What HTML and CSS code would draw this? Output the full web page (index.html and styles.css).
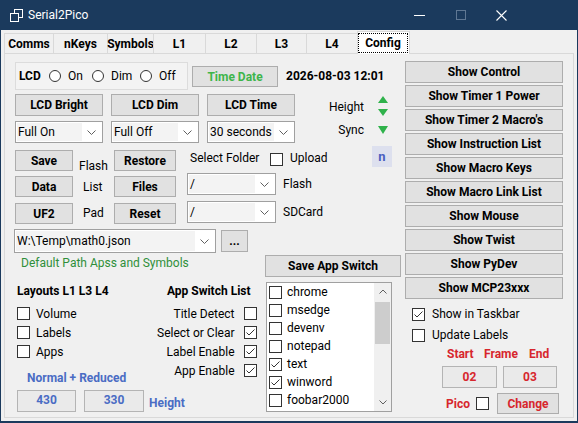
FILE: index.html
```html
<!DOCTYPE html>
<html lang="en">
<head>
<meta charset="utf-8">
<title>Serial2Pico</title>
<link rel="stylesheet" href="styles.css">
</head>
<body>
<div class="window">
  <div class="titlebar">
    <svg class="app-icon" width="13" height="13" viewBox="0 0 13 13">
      <rect x="4.5" y="0.5" width="8" height="8" fill="none" stroke="#fff"/>
      <rect x="0.5" y="4.5" width="8" height="8" fill="#1b3a5d" stroke="#fff"/>
    </svg>
    <span class="title">Serial2Pico</span>
    <div class="winctl">
      <span class="ctl"><svg width="11" height="1"><rect width="11" height="1" fill="#fff"/></svg></span>
      <span class="ctl"><svg width="10" height="10"><rect x="0.5" y="0.5" width="9" height="9" fill="none" stroke="#5f7793"/></svg></span>
      <span class="ctl"><svg width="11" height="11" viewBox="0 0 11 11"><path d="M0.5 0.5 L10.5 10.5 M10.5 0.5 L0.5 10.5" stroke="#fff" stroke-width="1.1"/></svg></span>
    </div>
  </div>

  <div class="tabs">
    <div class="tab tab-comms">Comms</div>
    <div class="tab tab-nkeys">nKeys</div>
    <div class="tab tab-symbols">Symbols</div>
    <div class="tab tab-l1">L1</div>
    <div class="tab tab-l2">L2</div>
    <div class="tab tab-l3">L3</div>
    <div class="tab tab-l4">L4</div>
    <div class="tab tab-config sel"><span class="focus">Config</span></div>
  </div>

  <div class="page">
    <div class="left">
      <!-- LCD mode + clock -->
      <div class="r1">
        <div class="lcd-group">
          <span class="lcd-label">LCD</span>
          <span class="radio-item ri-on"><span class="radio"></span>On</span>
          <span class="radio-item ri-dim"><span class="radio"></span>Dim</span>
          <span class="radio-item"><span class="radio"></span>Off</span>
        </div>
        <div class="btn time-btn">Time Date</div>
        <span class="datetime">2026-08-03 12:01</span>
      </div>

      <!-- LCD timers -->
      <div class="r23">
        <div class="grid3">
          <div class="btn">LCD Bright</div>
          <div class="btn">LCD Dim</div>
          <div class="btn">LCD Time</div>
          <div class="combo"><span class="val">Full On</span><span class="drop"><svg width="9" height="5" viewBox="0 0 9 5"><path d="M0.5 0.5 L4.5 4.5 L8.5 0.5" fill="none" stroke="#606060"/></svg></span></div>
          <div class="combo"><span class="val">Full Off</span><span class="drop"><svg width="9" height="5" viewBox="0 0 9 5"><path d="M0.5 0.5 L4.5 4.5 L8.5 0.5" fill="none" stroke="#606060"/></svg></span></div>
          <div class="combo"><span class="val">30 seconds</span><span class="drop"><svg width="9" height="5" viewBox="0 0 9 5"><path d="M0.5 0.5 L4.5 4.5 L8.5 0.5" fill="none" stroke="#606060"/></svg></span></div>
        </div>
        <div class="side">
          <span class="side-text h">Height</span>
          <span class="arrows">
            <svg width="10" height="7" viewBox="0 0 10 7"><path d="M5 0 L10 7 H0 Z" fill="#2fb24b"/></svg>
            <svg width="10" height="7" viewBox="0 0 10 7"><path d="M0 0 H10 L5 7 Z" fill="#2fb24b"/></svg>
          </span>
          <span class="side-text s">Sync</span>
          <span class="sync-arrow"><svg width="10" height="8" viewBox="0 0 10 8"><path d="M0 0 H10 L5 8 Z" fill="#2fb24b"/></svg></span>
        </div>
      </div>

      <!-- file actions -->
      <div class="r4a">
        <div class="btn btn-s">Save</div>
        <span class="lblcol flash-lbl">Flash</span>
        <div class="btn btn-m">Restore</div>
        <span class="sel-folder">Select Folder</span>
        <span class="chk chk-up"></span>
        <span class="upload">Upload</span>
        <span class="nbox">n</span>
      </div>
      <div class="r4b">
        <div class="btn btn-s">Data</div>
        <span class="lblcol list-lbl">List</span>
        <div class="btn btn-m">Files</div>
        <div class="combo folder"><span class="val">/</span><span class="drop"><svg width="9" height="5" viewBox="0 0 9 5"><path d="M0.5 0.5 L4.5 4.5 L8.5 0.5" fill="none" stroke="#606060"/></svg></span></div>
        <span class="dest">Flash</span>
      </div>
      <div class="r4c">
        <div class="btn btn-s">UF2</div>
        <span class="lblcol pad-lbl">Pad</span>
        <div class="btn btn-m">Reset</div>
        <div class="combo folder"><span class="val">/</span><span class="drop"><svg width="9" height="5" viewBox="0 0 9 5"><path d="M0.5 0.5 L4.5 4.5 L8.5 0.5" fill="none" stroke="#606060"/></svg></span></div>
        <span class="dest">SDCard</span>
      </div>

      <!-- default path -->
      <div class="r5">
        <div class="combo path"><span class="val">W:\Temp\math0.json</span><span class="drop"><svg width="9" height="5" viewBox="0 0 9 5"><path d="M0.5 0.5 L4.5 4.5 L8.5 0.5" fill="none" stroke="#606060"/></svg></span></div>
        <div class="btn dots">...</div>
      </div>

      <div class="lower">
        <div class="lp">
          <span class="defpath">Default Path Apss and Symbols</span>
          <div class="cols">
            <div class="lc">
              <span class="hdr">Layouts L1 L3 L4</span>
              <div class="crows">
                <div class="crow"><span class="chk"></span>Volume</div>
                <div class="crow"><span class="chk"></span>Labels</div>
                <div class="crow"><span class="chk"></span>Apps</div>
              </div>
              <span class="nr">Normal + Reduced</span>
              <div class="hrow">
                <span class="hbox hb1">430</span>
                <span class="hbox hb2">330</span>
                <span class="hlabel">Height</span>
              </div>
            </div>
            <div class="rc">
              <span class="hdr">App Switch List</span>
              <div class="crows">
                <div class="rrow">Title Detect<span class="chk"></span></div>
                <div class="rrow">Select or Clear<span class="chk on"><svg width="11" height="11" viewBox="0 0 11 11"><path d="M1.5 5.5 L4 8 L9.5 2.5" fill="none" stroke="#333"/></svg></span></div>
                <div class="rrow">Label Enable<span class="chk on"><svg width="11" height="11" viewBox="0 0 11 11"><path d="M1.5 5.5 L4 8 L9.5 2.5" fill="none" stroke="#333"/></svg></span></div>
                <div class="rrow">App Enable<span class="chk on"><svg width="11" height="11" viewBox="0 0 11 11"><path d="M1.5 5.5 L4 8 L9.5 2.5" fill="none" stroke="#333"/></svg></span></div>
              </div>
            </div>
          </div>
        </div>
        <div class="rp">
          <div class="btn save-sw">Save App Switch</div>
          <div class="clist">
            <div class="items">
              <div class="item"><span class="chk"></span>chrome</div>
              <div class="item"><span class="chk"></span>msedge</div>
              <div class="item"><span class="chk"></span>devenv</div>
              <div class="item"><span class="chk"></span>notepad</div>
              <div class="item"><span class="chk on"><svg width="11" height="11" viewBox="0 0 11 11"><path d="M1.5 5.5 L4 8 L9.5 2.5" fill="none" stroke="#333"/></svg></span>text</div>
              <div class="item"><span class="chk on"><svg width="11" height="11" viewBox="0 0 11 11"><path d="M1.5 5.5 L4 8 L9.5 2.5" fill="none" stroke="#333"/></svg></span>winword</div>
              <div class="item"><span class="chk"></span>foobar2000</div>
            </div>
            <div class="sbar">
              <span class="sb-btn"><svg width="8" height="5" viewBox="0 0 8 5"><path d="M0.5 4.5 L4 1 L7.5 4.5" fill="none" stroke="#606060"/></svg></span>
              <span class="thumb"></span>
              <span class="sb-fill"></span>
              <span class="sb-btn"><svg width="8" height="5" viewBox="0 0 8 5"><path d="M0.5 0.5 L4 4 L7.5 0.5" fill="none" stroke="#606060"/></svg></span>
            </div>
          </div>
        </div>
      </div>
    </div>

    <div class="right">
      <div class="rbtns">
        <div class="btn">Show Control</div>
        <div class="btn">Show Timer 1 Power</div>
        <div class="btn">Show Timer 2 Macro's</div>
        <div class="btn">Show Instruction List</div>
        <div class="btn">Show Macro Keys</div>
        <div class="btn">Show Macro Link List</div>
        <div class="btn">Show Mouse</div>
        <div class="btn">Show Twist</div>
        <div class="btn">Show PyDev</div>
        <div class="btn">Show MCP23xxx</div>
      </div>
      <div class="rchk first"><span class="chk on"><svg width="11" height="11" viewBox="0 0 11 11"><path d="M1.5 5.5 L4 8 L9.5 2.5" fill="none" stroke="#333"/></svg></span>Show in Taskbar</div>
      <div class="rchk"><span class="chk"></span>Update Labels</div>
      <div class="sfe"><span class="sfe-start">Start</span><span class="sfe-frame">Frame</span><span>End</span></div>
      <div class="fbox-row">
        <span class="fbox fb1">02</span>
        <span class="fbox fb2">03</span>
      </div>
      <div class="pico-row">
        <span class="pico">Pico</span>
        <span class="chk"></span>
        <div class="btn change">Change</div>
      </div>
    </div>
  </div>
</div>
</body>
</html>
```

FILE: styles.css
```css
* { box-sizing: border-box; }

html, body {
  margin: 0;
  padding: 0;
}

body {
  width: 578px;
  height: 423px;
  overflow: hidden;
  font-family: Roboto, "Noto Sans", sans-serif;
  font-size: 12px;
  line-height: 16px;
  color: #000;
  background: #f0f0f0;
  white-space: nowrap;
}

/* window frame */
.window {
  width: 578px;
  height: 423px;
  display: flex;
  flex-direction: column;
  background: #f0f0f0;
  border: 1px solid #1b3a5d;
  border-top: 0;
  border-bottom-width: 2px;
}

.titlebar {
  flex: none;
  height: 30px;
  margin: 0 -1px;
  display: flex;
  align-items: center;
  background: #1b3a5d;
  color: #fff;
}

.app-icon { margin-left: 10px; }

.title { margin-left: 5px; }

.winctl {
  margin-left: auto;
  margin-right: 56px;
  display: flex;
}

.ctl {
  width: 41px;
  height: 30px;
  display: flex;
  align-items: center;
  justify-content: center;
}

/* tab strip */
.tabs {
  flex: none;
  height: 23px;
  margin-left: 3px;
  display: flex;
  align-items: flex-end;
  position: relative;
  z-index: 1;
}

.tab {
  height: 20px;
  margin-left: -1px;
  display: flex;
  align-items: center;
  justify-content: center;
  border: 1px solid #d9d9d9;
  border-bottom: 0;
  background: #f0f0f0;
  font-weight: bold;
}

.tab-comms { width: 50px; margin-left: 0; }
.tab-nkeys { width: 55px; }
.tab-symbols { width: 47px; }
.tab-l1 { width: 53px; }
.tab-l2 { width: 52px; }
.tab-l3 { width: 51px; }
.tab-l4 { width: 52px; }
.tab-config { width: 53px; }

.tab.sel {
  height: 23px;
  margin-bottom: -1px;
  padding: 1px 1px 1px 0;
  align-items: stretch;
  background: #fff;
}

.focus {
  flex: 1;
  display: flex;
  align-items: center;
  justify-content: center;
  border: 1px dotted #000;
}

/* tab page */
.page {
  flex: none;
  width: 570px;
  height: 365px;
  margin-left: 3px;
  padding: 7px 0 0 9px;
  display: flex;
  border: 1px solid #d9d9d9;
}

.left {
  flex: none;
  width: 387px;
  padding-top: 1px;
  display: flex;
  flex-direction: column;
}

.right {
  flex: none;
  width: 158px;
  margin-left: 4px;
  display: flex;
  flex-direction: column;
}

/* common controls */
.btn {
  flex: none;
  height: 22px;
  display: flex;
  align-items: center;
  justify-content: center;
  background: #e1e1e1;
  border: 1px solid #adadad;
  font-weight: bold;
}

.chk {
  flex: none;
  width: 13px;
  height: 13px;
  display: inline-flex;
  align-items: center;
  justify-content: center;
  background: #fff;
  border: 1px solid #333;
}

.radio {
  flex: none;
  width: 12px;
  height: 12px;
  border: 1px solid #333;
  border-radius: 50%;
  background: #fff;
}

.combo {
  flex: none;
  height: 22px;
  display: flex;
  padding: 1px;
  background: #fff;
  border: 1px solid #a0a0a0;
}

.combo .val {
  flex: 1;
  padding-left: 1px;
  line-height: 18px;
  overflow: hidden;
  background: #f3f3f3;
}

.combo .drop {
  width: 19px;
  display: flex;
  align-items: center;
  justify-content: center;
}

/* LCD row */
.r1 {
  height: 28px;
  display: flex;
}

.lcd-group {
  flex: none;
  width: 173px;
  height: 28px;
  margin-left: 1px;
  padding-left: 3px;
  display: flex;
  align-items: center;
  background: #f3f3f3;
  border: 1px solid #dcdcdc;
}

.lcd-label { width: 30px; font-weight: bold; }

.radio-item {
  display: flex;
  align-items: center;
  gap: 7px;
}

.ri-on { width: 43px; }
.ri-dim { width: 48px; }

.time-btn {
  width: 86px;
  height: 21px;
  margin: 4px 0 0 4px;
  color: #3db54a;
}

.datetime {
  align-self: center;
  margin-left: 8px;
  font-weight: bold;
}

/* LCD timers */
.r23 {
  margin-top: 4px;
  display: flex;
}

.grid3 {
  margin-left: 1px;
  display: grid;
  grid-template-columns: repeat(3, 88px);
  grid-template-rows: 22px 22px;
  column-gap: 8px;
  row-gap: 5px;
}

.side {
  display: grid;
  grid-template-columns: 69px 10px;
  grid-template-rows: 27px 22px;
  column-gap: 14px;
}

.side-text { text-align: right; }
.side-text.h { margin-top: 5px; }
.side-text.s { margin-top: 1px; }

.arrows {
  margin-top: 2px;
  display: flex;
  flex-direction: column;
  gap: 6px;
}

.arrows svg, .sync-arrow svg { display: block; }

.sync-arrow { margin-top: 5px; }

/* file actions */
.r4a, .r4b, .r4c {
  display: flex;
  align-items: flex-start;
}

.r4a { height: 25px; margin-top: 3px; }
.r4b { height: 24px; margin-top: 2px; }
.r4c { height: 23px; margin-top: 4px; }

.btn-s { width: 58px; height: 21px; margin-left: 1px; }
.btn-m { width: 62px; height: 21px; }

.r4a .btn { margin-top: 4px; }
.r4b .btn { margin-top: 3px; }
.r4c .btn { margin-top: 2px; }

.lblcol { flex: none; width: 41px; }
.flash-lbl { padding-left: 6px; margin-top: 12px; }
.list-lbl { padding-left: 10px; margin-top: 6px; }
.pad-lbl { padding-left: 10px; margin-top: 4px; }

.sel-folder { flex: none; width: 80px; margin: 4px 0 0 14px; }
.chk-up { margin-top: 7px; }
.upload { margin: 4px 0 0 7px; }

.nbox {
  flex: none;
  width: 20px;
  height: 21px;
  margin: 0 9px 0 auto;
  display: flex;
  align-items: center;
  justify-content: center;
  background: #dde0ee;
  color: #4b5fc0;
  font-weight: bold;
  font-size: 13px;
}

.combo.folder { width: 89px; margin-left: 11px; }
.dest { margin: 3px 0 0 7px; }

/* path row */
.r5 {
  margin-top: 5px;
  display: flex;
}

.combo.path { width: 202px; height: 24px; }
.combo.path .val { line-height: 20px; }

.dots {
  width: 27px;
  margin: 1px 0 0 5px;
}

/* lower block */
.lower {
  margin-top: 2px;
  display: flex;
}

.lp {
  flex: none;
  width: 251px;
  display: flex;
  flex-direction: column;
}

.defpath {
  padding-left: 7px;
  color: #2f8f3a;
}

.cols { display: flex; }

/* the height boxes run under the right-hand checks, so the column is narrower than its content */
.lc {
  flex: none;
  width: 140px;
  margin-left: 3px;
  display: flex;
  flex-direction: column;
}

.hdr {
  margin-top: 12px;
  font-weight: bold;
}

.crows { margin-top: 5px; }

.crow {
  height: 19px;
  display: flex;
  align-items: center;
  gap: 6px;
}

.nr {
  margin-top: 9px;
  padding-left: 10px;
  color: #4a6cc4;
  font-weight: bold;
}

.hrow {
  margin-top: 4px;
  display: flex;
}

.hbox {
  flex: none;
  height: 22px;
  padding-top: 1px;
  text-align: center;
  background: #eaeaea;
  border: 1px solid #b4b4b4;
  color: #4a6cc4;
  font-weight: bold;
}

.hb1 { width: 59px; }
.hb2 { width: 60px; margin-left: 8px; }

.hlabel {
  margin: 5px 0 0 5px;
  color: #4a6cc4;
  font-weight: bold;
}

.rc {
  flex: none;
  margin: 0 10px 0 auto;
  display: flex;
  flex-direction: column;
  align-items: flex-end;
}

.rc .hdr { padding-right: 6px; }

.rrow {
  height: 19px;
  display: flex;
  align-items: center;
  justify-content: flex-end;
  gap: 9px;
}

.rp {
  flex: none;
  width: 136px;
  display: flex;
  flex-direction: column;
}

.save-sw { height: 22px; }

/* checked list box */
.clist {
  width: 126px;
  height: 130px;
  margin: 5px 0 0 1px;
  display: flex;
  background: #fff;
  border: 1px solid #a0a0a0;
}

.items { flex: 1; }

.item {
  height: 18px;
  padding-left: 2px;
  display: flex;
  align-items: center;
  gap: 5px;
}

.sbar {
  width: 17px;
  display: flex;
  flex-direction: column;
  background: #f0f0f0;
}

.sb-btn {
  height: 17px;
  display: flex;
  align-items: center;
  justify-content: center;
}

.thumb {
  height: 42px;
  margin: 2px 1px 0;
  background: #cdcdcd;
}

.sb-fill { flex: 1; }

/* right column */
.rbtns {
  display: flex;
  flex-direction: column;
  gap: 2px;
}

.rchk {
  height: 20px;
  margin-top: 1px;
  padding-left: 7px;
  display: flex;
  align-items: center;
  gap: 7px;
}

.rchk.first { margin-top: 5px; }

.sfe {
  margin-top: 1px;
  padding-left: 42px;
  display: flex;
  color: #d7262d;
  font-weight: bold;
}

.sfe-start { width: 37px; }
.sfe-frame { width: 45px; }

.fbox-row {
  margin-top: 4px;
  padding-left: 37px;
  display: flex;
  gap: 6px;
}

.fbox {
  height: 22px;
  display: flex;
  align-items: center;
  justify-content: center;
  background: #eaeaea;
  border: 1px solid #b4b4b4;
  color: #d7262d;
  font-weight: bold;
}

.fb1 { width: 55px; }
.fb2 { width: 54px; }

.pico-row {
  height: 21px;
  margin-top: 5px;
  padding-left: 41px;
  display: flex;
  align-items: center;
}

.pico {
  flex: none;
  width: 30px;
  color: #d7262d;
  font-weight: bold;
}

.change {
  width: 62px;
  height: 21px;
  margin-left: 8px;
  color: #d7262d;
}
```
